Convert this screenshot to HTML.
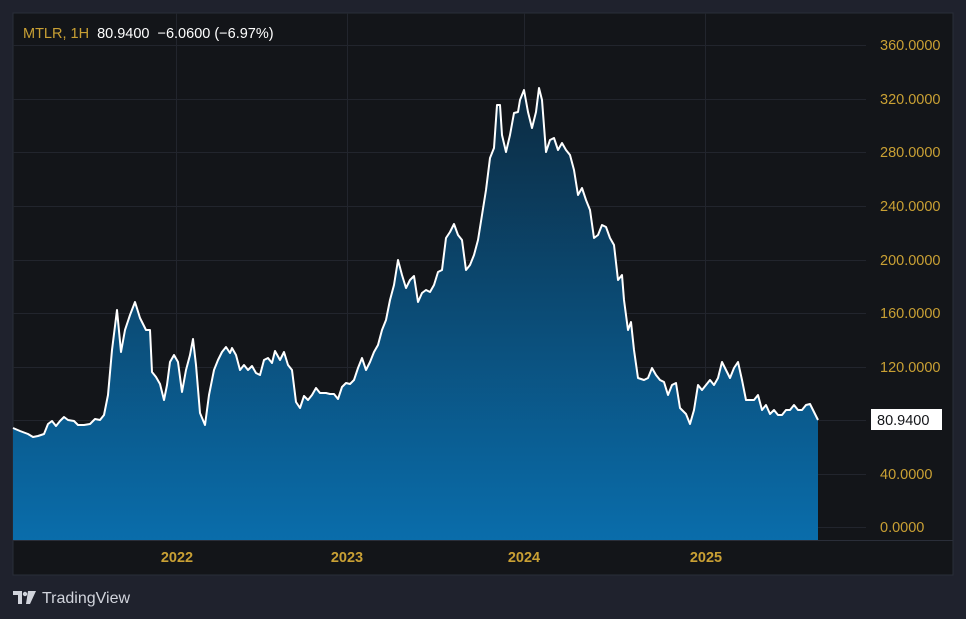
<!DOCTYPE html>
<html><head><meta charset="utf-8"><style>
html,body{margin:0;padding:0;background:#1f222d;width:966px;height:619px;overflow:hidden;font-family:"Liberation Sans",sans-serif}
svg{display:block}
</style></head><body>
<svg width="966" height="619" viewBox="0 0 966 619" xmlns="http://www.w3.org/2000/svg">
<defs><linearGradient id="g" x1="0" y1="85" x2="0" y2="540" gradientUnits="userSpaceOnUse"><stop offset="0" stop-color="#0c2a40"/><stop offset="1" stop-color="#0a6dab"/></linearGradient></defs>
<rect x="0" y="0" width="966" height="619" fill="#1f222d"/>
<rect x="13" y="13" width="940" height="562" fill="#131519" stroke="#2a2e39"/>
<g stroke="#22252d" stroke-width="1">
<line x1="13" y1="45.5" x2="866" y2="45.5"/><line x1="13" y1="99.5" x2="866" y2="99.5"/><line x1="13" y1="152.5" x2="866" y2="152.5"/><line x1="13" y1="206.5" x2="866" y2="206.5"/><line x1="13" y1="260.5" x2="866" y2="260.5"/><line x1="13" y1="313.5" x2="866" y2="313.5"/><line x1="13" y1="367.5" x2="866" y2="367.5"/><line x1="13" y1="420.5" x2="866" y2="420.5"/><line x1="13" y1="474.5" x2="866" y2="474.5"/><line x1="13" y1="527.5" x2="866" y2="527.5"/>
<line x1="176.5" y1="13" x2="176.5" y2="540"/><line x1="347.5" y1="13" x2="347.5" y2="540"/><line x1="524.5" y1="13" x2="524.5" y2="540"/><line x1="705.5" y1="13" x2="705.5" y2="540"/>
</g>
<line x1="13" y1="540.5" x2="953" y2="540.5" stroke="#2a2e39"/>
<polygon fill="url(#g)" points="13,540 13,428 20,431 28,434 33,437 38,436 44,434 48,424 52,421 56,426 60,421 64,417 68,420 74,421 78,425 84,425 90,424 95,419 100,420 104,415 108,395 112,350 117,310 121,352 125,330 130,315 135,302 140,318 146,330 150,330 152,372 156,377 160,384 164,400 167,385 170,362 174,355 178,362 182,392 186,370 190,355 193,339 196,365 200,413 205,425 209,395 214,370 218,360 222,352 226,347 230,353 232,348 236,355 240,370 244,365 248,370 252,366 256,373 260,375 264,360 268,358 272,363 275,351 280,360 284,352 288,365 292,370 296,402 300,408 304,396 308,400 312,395 316,388 320,393 326,393 330,394 334,394 338,399 342,387 346,383 350,384 354,380 358,368 362,358 366,370 370,362 374,352 378,345 382,330 386,320 390,300 394,285 398,260 402,275 406,288 410,280 414,276 418,302 422,293 426,290 430,292 434,285 438,272 442,270 446,238 450,232 454,224 458,235 462,240 466,270 470,265 474,255 478,240 482,215 486,190 490,158 494,148 497,105 500,105 502,135 506,152 510,135 514,113 518,112 520,100 524,90 528,112 532,128 536,112 539,88 542,100 546,152 550,140 554,138 558,150 562,143 566,150 570,155 574,170 578,195 582,188 586,200 590,210 594,238 598,235 602,225 606,227 610,238 614,245 618,280 622,275 624,300 628,330 631,322 634,350 638,378 644,380 648,378 652,368 656,375 660,380 664,382 668,395 672,385 676,383 680,408 686,414 690,424 694,410 698,385 702,390 706,385 710,380 714,385 718,378 722,362 726,370 730,378 734,368 738,362 742,380 746,400 750,400 754,400 758,395 762,410 766,405 770,414 774,410 778,415 782,415 786,410 790,410 794,405 798,410 802,410 806,405 810,404 814,412 818,420 818,540"/>
<polyline fill="none" stroke="#fff" stroke-width="2" stroke-linejoin="round" points="13,428 20,431 28,434 33,437 38,436 44,434 48,424 52,421 56,426 60,421 64,417 68,420 74,421 78,425 84,425 90,424 95,419 100,420 104,415 108,395 112,350 117,310 121,352 125,330 130,315 135,302 140,318 146,330 150,330 152,372 156,377 160,384 164,400 167,385 170,362 174,355 178,362 182,392 186,370 190,355 193,339 196,365 200,413 205,425 209,395 214,370 218,360 222,352 226,347 230,353 232,348 236,355 240,370 244,365 248,370 252,366 256,373 260,375 264,360 268,358 272,363 275,351 280,360 284,352 288,365 292,370 296,402 300,408 304,396 308,400 312,395 316,388 320,393 326,393 330,394 334,394 338,399 342,387 346,383 350,384 354,380 358,368 362,358 366,370 370,362 374,352 378,345 382,330 386,320 390,300 394,285 398,260 402,275 406,288 410,280 414,276 418,302 422,293 426,290 430,292 434,285 438,272 442,270 446,238 450,232 454,224 458,235 462,240 466,270 470,265 474,255 478,240 482,215 486,190 490,158 494,148 497,105 500,105 502,135 506,152 510,135 514,113 518,112 520,100 524,90 528,112 532,128 536,112 539,88 542,100 546,152 550,140 554,138 558,150 562,143 566,150 570,155 574,170 578,195 582,188 586,200 590,210 594,238 598,235 602,225 606,227 610,238 614,245 618,280 622,275 624,300 628,330 631,322 634,350 638,378 644,380 648,378 652,368 656,375 660,380 664,382 668,395 672,385 676,383 680,408 686,414 690,424 694,410 698,385 702,390 706,385 710,380 714,385 718,378 722,362 726,370 730,378 734,368 738,362 742,380 746,400 750,400 754,400 758,395 762,410 766,405 770,414 774,410 778,415 782,415 786,410 790,410 794,405 798,410 802,410 806,405 810,404 814,412 818,420"/>
<g fill="#c9a034" font-size="14.5">
<text x="880" y="50">360.0000</text><text x="880" y="104">320.0000</text><text x="880" y="157">280.0000</text><text x="880" y="211">240.0000</text><text x="880" y="265">200.0000</text><text x="880" y="318">160.0000</text><text x="880" y="372">120.0000</text><text x="880" y="479">40.0000</text><text x="880" y="532">0.0000</text>
</g>
<rect x="871" y="409" width="71" height="21" fill="#fff"/>
<text x="877" y="425" fill="#131519" font-size="14.5">80.9400</text>
<g fill="#c9a034" font-size="14.5" font-weight="bold" text-anchor="middle">
<text x="177" y="562">2022</text><text x="347" y="562">2023</text><text x="524" y="562">2024</text><text x="706" y="562">2025</text>
</g>
<text x="23" y="38" font-size="14.5"><tspan fill="#c9a034">MTLR, 1H</tspan><tspan fill="#fff" dx="8">80.9400</tspan><tspan fill="#fff" dx="8">−6.0600 (−6.97%)</tspan></text>
<g fill="#d1d4dc">
<path d="M13 591h9v13h-4v-9h-5z"/><circle cx="25" cy="594" r="2.2"/><path d="M28 591h8l-6 13h-4z"/>
</g>
<text x="42" y="603" fill="#d1d4dc" font-size="16">TradingView</text>
</svg>
</body></html>
